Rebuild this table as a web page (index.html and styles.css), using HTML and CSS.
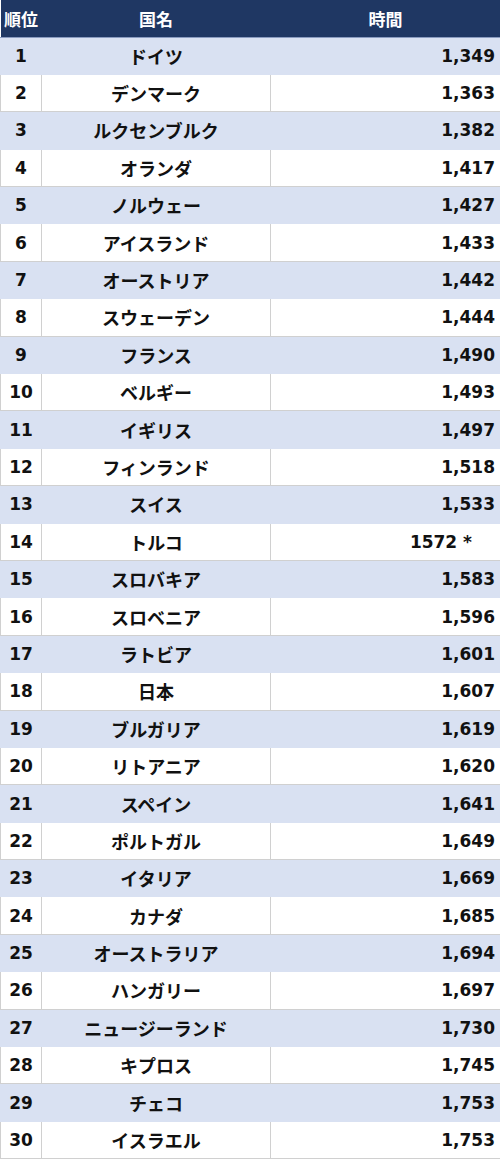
FILE: index.html
```html
<!DOCTYPE html>
<html lang="ja">
<head>
<meta charset="utf-8">
<title>ランキング</title>
<link rel="stylesheet" href="styles.css">
</head>
<body>
<table class="rank">
<colgroup><col class="c-rank"><col class="c-name"><col class="c-time"></colgroup>
<thead>
<tr><th>順位</th><th>国名</th><th>時間</th></tr>
</thead>
<tbody>
<tr class="odd"><td>1</td><td>ドイツ</td><td>1,349</td></tr>
<tr><td>2</td><td>デンマーク</td><td>1,363</td></tr>
<tr class="odd"><td>3</td><td>ルクセンブルク</td><td>1,382</td></tr>
<tr><td>4</td><td>オランダ</td><td>1,417</td></tr>
<tr class="odd"><td>5</td><td>ノルウェー</td><td>1,427</td></tr>
<tr><td>6</td><td>アイスランド</td><td>1,433</td></tr>
<tr class="odd"><td>7</td><td>オーストリア</td><td>1,442</td></tr>
<tr><td>8</td><td>スウェーデン</td><td>1,444</td></tr>
<tr class="odd"><td>9</td><td>フランス</td><td>1,490</td></tr>
<tr><td>10</td><td>ベルギー</td><td>1,493</td></tr>
<tr class="odd"><td>11</td><td>イギリス</td><td>1,497</td></tr>
<tr><td>12</td><td>フィンランド</td><td>1,518</td></tr>
<tr class="odd"><td>13</td><td>スイス</td><td>1,533</td></tr>
<tr><td>14</td><td>トルコ</td><td><span class="note">1572 *</span></td></tr>
<tr class="odd"><td>15</td><td>スロバキア</td><td>1,583</td></tr>
<tr><td>16</td><td>スロベニア</td><td>1,596</td></tr>
<tr class="odd"><td>17</td><td>ラトビア</td><td>1,601</td></tr>
<tr><td>18</td><td>日本</td><td>1,607</td></tr>
<tr class="odd"><td>19</td><td>ブルガリア</td><td>1,619</td></tr>
<tr><td>20</td><td>リトアニア</td><td>1,620</td></tr>
<tr class="odd"><td>21</td><td>スペイン</td><td>1,641</td></tr>
<tr><td>22</td><td>ポルトガル</td><td>1,649</td></tr>
<tr class="odd"><td>23</td><td>イタリア</td><td>1,669</td></tr>
<tr><td>24</td><td>カナダ</td><td>1,685</td></tr>
<tr class="odd"><td>25</td><td>オーストラリア</td><td>1,694</td></tr>
<tr><td>26</td><td>ハンガリー</td><td>1,697</td></tr>
<tr class="odd"><td>27</td><td>ニュージーランド</td><td>1,730</td></tr>
<tr><td>28</td><td>キプロス</td><td>1,745</td></tr>
<tr class="odd"><td>29</td><td>チェコ</td><td>1,753</td></tr>
<tr><td>30</td><td>イスラエル</td><td>1,753</td></tr>
</tbody>
</table>
</body>
</html>
```
FILE: styles.css
```css
html, body {
  margin: 0;
  padding: 0;
  background: #ffffff;
}
.rank {
  width: 500px;
  table-layout: fixed;
  border-collapse: collapse;
  font-family: "DejaVu Sans", "Noto Sans CJK JP", sans-serif;
  font-weight: bold;
  font-size: 17px;
  color: #111111;
}
.c-rank { width: 41px; }
.c-name { width: 229px; }
.c-time { width: 230px; }
.rank thead th {
  height: 37px;
  padding: 0;
  background: #1f3763;
  color: #ffffff;
  font-family: "Noto Sans CJK JP", sans-serif;
  font-size: 17px;
  font-weight: bold;
  text-align: center;
  border-bottom: 1px solid #8a9bc0;
  box-sizing: border-box;
}
.rank tbody tr {
  height: 37.4px;
}
.rank td {
  padding: 0;
  border: 1px solid #d0d0d0;
  text-align: center;
  white-space: nowrap;
}
.rank td:nth-child(2) {
  font-family: "Noto Sans CJK JP", sans-serif;
  font-size: 18px;
}
.rank td:nth-child(3) {
  text-align: right;
  padding-right: 5px;
}
.rank tr.odd td {
  background: #d9e1f2;
  border-color: #d9e1f2;
}
.note {
  padding-right: 23px;
}
```
